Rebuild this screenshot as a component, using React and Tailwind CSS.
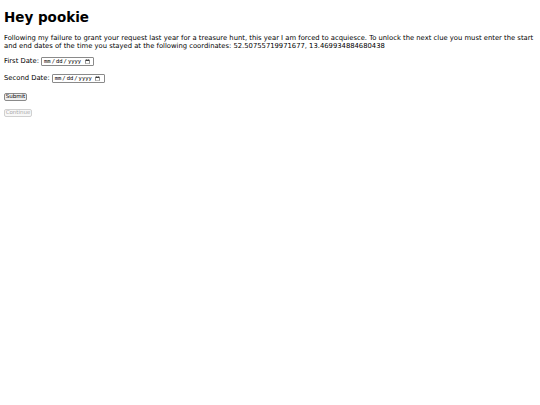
export default function App() {
  return (
    <div className="min-h-screen bg-white p-1 font-['DejaVu_Sans',sans-serif] text-black">
      <h1 className="mt-[5px] mb-[8.5px] text-[13.5px] font-bold leading-[16px]">Hey pookie</h1>
      <p className="text-[6.8px] leading-[8px]">
        Following my failure to grant your request last year for a treasure hunt, this year I am forced to acquiesce. To unlock the next clue you must enter the start and end dates of the time you stayed at the following coordinates: 52.50755719971677, 13.469934884680438
      </p>
      <form className="mt-[7px] text-[6.8px]">
        <div className="flex items-center gap-[2px] h-[10px]">
          <label>First Date:</label>
          <input type="date" className="h-[9px] w-[53px] rounded-[1px] border border-[#8a8a8a] px-[1px] font-['DejaVu_Sans_Mono',monospace] text-[5.5px] leading-none" />
        </div>
        <div className="mt-[7px] flex items-center gap-[2px] h-[10px]">
          <label>Second Date:</label>
          <input type="date" className="h-[9px] w-[53px] rounded-[1px] border border-[#8a8a8a] px-[1px] font-['DejaVu_Sans_Mono',monospace] text-[5.5px] leading-none" />
        </div>
        <div className="mt-[9.5px] flex">
          <button type="button" className="h-[8px] w-[23px] rounded-[2px] border border-[#8a8a8a] bg-[#efefef] text-[5.5px] leading-none">Submit</button>
        </div>
        <div className="mt-[8px] flex">
          <button type="button" disabled className="h-[8px] w-[28px] rounded-[2px] border border-[#d0d0d0] bg-[#f8f8f8] text-[5.5px] leading-none text-[#a8a8a8]">Continue</button>
        </div>
      </form>
    </div>
  );
}
